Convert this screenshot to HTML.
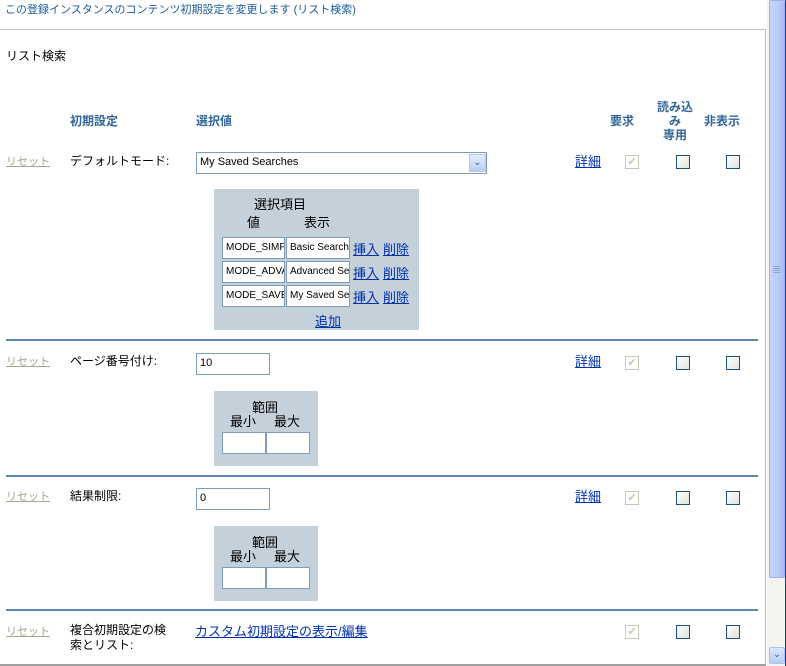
<!DOCTYPE html>
<html><head><meta charset="utf-8">
<style>
*{margin:0;padding:0;box-sizing:border-box}
body{width:786px;height:666px;overflow:hidden;background:#fff;font-family:"Liberation Sans","Noto Sans CJK JP",sans-serif;font-size:12px;color:#000;position:relative}
.a{position:absolute;white-space:nowrap}
.t{font-size:12px;line-height:14px}
.blue{color:#1a5a9c}
.hd{color:#336699;font-weight:bold;font-size:12px;line-height:14px;text-align:center}
.rs{color:#a8a490;text-decoration:underline;font-size:11px}
.lk{color:#0033aa;text-decoration:underline;font-size:13px}
.sep{position:absolute;left:6px;width:752px;height:2px;background:#5f86ad}
.cb{position:absolute;width:14px;height:14px;border:1px solid #1c5180;background:linear-gradient(135deg,#fff,#e0e0dc)}
.cbd{position:absolute;width:14px;height:14px;border:1px solid #c9c7ba;background:#fff;color:#c9c7ba;font-size:11px;line-height:12px;text-align:center}
.inp{position:absolute;border:1px solid #7f9db9;background:#fff;font-size:11px;line-height:19px;padding-left:3px;overflow:hidden;white-space:nowrap}
.box{position:absolute;background:#c4d0da}
</style></head><body>
<div class="a blue" style="left:5px;top:3px;font-size:11px;line-height:14px">この登録インスタンスのコンテンツ初期設定を変更します (リスト検索)</div>
<div class="a" style="left:0;top:29px;width:766px;height:1px;background:#c0c0c0"></div>
<div class="a" style="left:765px;top:29px;width:1px;height:637px;background:#c0c0c0"></div>
<div class="a" style="left:0;top:664px;width:766px;height:2px;background:#a0a0a0"></div>

<div class="a t" style="left:6px;top:49px">リスト検索</div>

<div class="a hd" style="left:70px;top:114px">初期設定</div>
<div class="a hd" style="left:196px;top:114px">選択値</div>
<div class="a hd" style="left:610px;top:114px">要求</div>
<div class="a hd" style="left:653px;top:100px;width:44px">読み込<br>み<br>専用</div>
<div class="a hd" style="left:704px;top:114px">非表示</div>

<!-- row1 -->
<div class="a rs" style="left:6px;top:153px">リセット</div>
<div class="a t" style="left:70px;top:154px">デフォルトモード:</div>
<div class="inp" style="left:196px;top:152px;width:291px;height:22px">My Saved Searches</div>
<div class="a" style="left:469px;top:154px;width:17px;height:18px;background:linear-gradient(#e4ecfb,#bccdf2);border:1px solid #b5c7ee;color:#4d6185;font-size:10px;text-align:center;line-height:16px">&#8964;</div>
<div class="a lk" style="left:575px;top:151px">詳細</div>
<div class="cbd" style="left:625px;top:155px">✔</div>
<div class="cb" style="left:676px;top:155px"></div>
<div class="cb" style="left:726px;top:155px"></div>

<div class="box" style="left:214px;top:189px;width:205px;height:141px"></div>
<div class="a t" style="left:254px;top:198px;font-size:13px">選択項目</div>
<div class="a t" style="left:247px;top:216px;font-size:13px">値</div>
<div class="a t" style="left:304px;top:216px;font-size:13px">表示</div>
<div class="inp" style="left:222px;top:237px;width:63px;height:22px;font-size:10px">MODE_SIMP</div>
<div class="inp" style="left:286px;top:237px;width:64px;height:22px;font-size:10px">Basic Search</div>
<div class="inp" style="left:222px;top:261px;width:63px;height:22px;font-size:10px">MODE_ADVA</div>
<div class="inp" style="left:286px;top:261px;width:64px;height:22px;font-size:10px">Advanced Se</div>
<div class="inp" style="left:222px;top:285px;width:63px;height:22px;font-size:10px">MODE_SAVE</div>
<div class="inp" style="left:286px;top:285px;width:64px;height:22px;font-size:10px">My Saved Se</div>
<div class="a lk" style="left:353px;top:239px">挿入</div><div class="a lk" style="left:383px;top:239px">削除</div>
<div class="a lk" style="left:353px;top:263px">挿入</div><div class="a lk" style="left:383px;top:263px">削除</div>
<div class="a lk" style="left:353px;top:287px">挿入</div><div class="a lk" style="left:383px;top:287px">削除</div>
<div class="a lk" style="left:315px;top:311px">追加</div>

<div class="sep" style="top:339px"></div>

<!-- row2 -->
<div class="a rs" style="left:6px;top:353px">リセット</div>
<div class="a t" style="left:70px;top:354px">ページ番号付け:</div>
<div class="inp" style="left:196px;top:353px;width:74px;height:22px">10</div>
<div class="a lk" style="left:575px;top:351px">詳細</div>
<div class="cbd" style="left:625px;top:356px">✔</div>
<div class="cb" style="left:676px;top:356px"></div>
<div class="cb" style="left:726px;top:356px"></div>
<div class="box" style="left:214px;top:391px;width:104px;height:75px"></div>
<div class="a t" style="left:252px;top:401px;font-size:13px">範囲</div>
<div class="a t" style="left:230px;top:415px;font-size:13px">最小</div>
<div class="a t" style="left:274px;top:415px;font-size:13px">最大</div>
<div class="inp" style="left:222px;top:432px;width:44px;height:22px"></div>
<div class="inp" style="left:266px;top:432px;width:44px;height:22px"></div>

<div class="sep" style="top:475px"></div>

<!-- row3 -->
<div class="a rs" style="left:6px;top:488px">リセット</div>
<div class="a t" style="left:70px;top:489px">結果制限:</div>
<div class="inp" style="left:196px;top:488px;width:74px;height:22px">0</div>
<div class="a lk" style="left:575px;top:486px">詳細</div>
<div class="cbd" style="left:625px;top:491px">✔</div>
<div class="cb" style="left:676px;top:491px"></div>
<div class="cb" style="left:726px;top:491px"></div>
<div class="box" style="left:214px;top:526px;width:104px;height:75px"></div>
<div class="a t" style="left:252px;top:536px;font-size:13px">範囲</div>
<div class="a t" style="left:230px;top:550px;font-size:13px">最小</div>
<div class="a t" style="left:274px;top:550px;font-size:13px">最大</div>
<div class="inp" style="left:222px;top:567px;width:44px;height:22px"></div>
<div class="inp" style="left:266px;top:567px;width:44px;height:22px"></div>

<div class="sep" style="top:609px"></div>

<!-- row4 -->
<div class="a rs" style="left:6px;top:623px">リセット</div>
<div class="a t" style="left:70px;top:623px;line-height:15px">複合初期設定の検<br>索とリスト:</div>
<div class="a lk" style="left:195px;top:621px">カスタム初期設定の表示/編集</div>
<div class="cbd" style="left:625px;top:625px">✔</div>
<div class="cb" style="left:676px;top:625px"></div>
<div class="cb" style="left:726px;top:625px"></div>

<!-- scrollbar -->
<div class="a" style="left:767px;top:0;width:19px;height:666px;background:#f4f3ee"></div>
<div class="a" style="left:769px;top:0;width:16px;height:578px;background:linear-gradient(90deg,#c8d6fb,#b7cafa 60%,#a9bdf0);border:1px solid #9fb3e8;border-radius:2px"></div>
<div class="a" style="left:773px;top:266px;width:7px;height:8px;background:repeating-linear-gradient(#8ea6e0 0 1px,transparent 1px 2px)"></div>
<div class="a" style="left:769px;top:647px;width:16px;height:17px;background:linear-gradient(#dce6fd,#b8cbf7);border:1px solid #aebfee;border-radius:2px;color:#4d6185;font-size:10px;text-align:center;line-height:14px">&#8964;</div>
<div class="a" style="left:785px;top:0;width:1px;height:666px;background:#0a3fa8"></div>
</body></html>
